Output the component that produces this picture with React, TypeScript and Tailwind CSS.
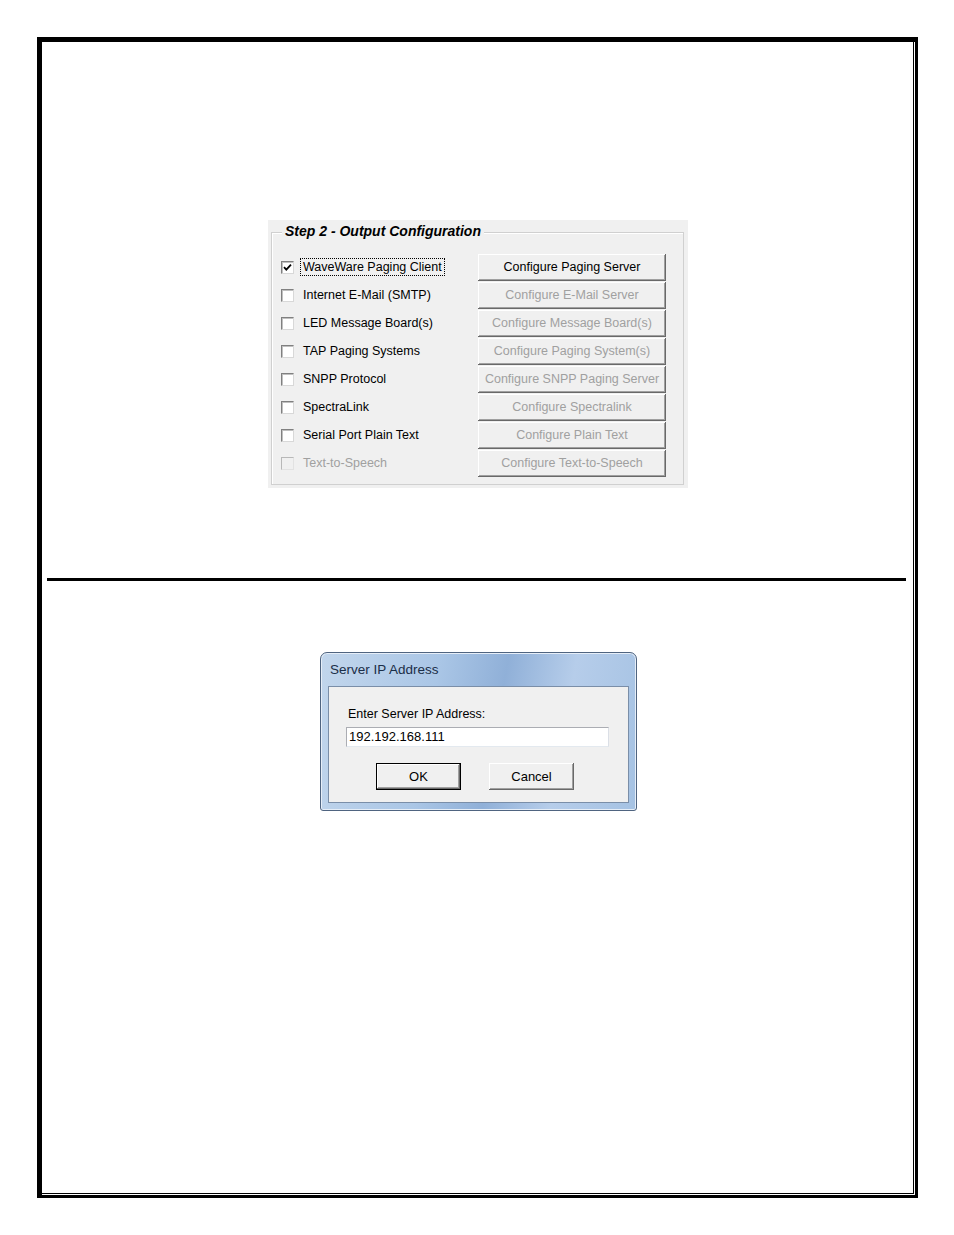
import React from 'react';

const rows = [
  { label: 'WaveWare Paging Client', button: 'Configure Paging Server', checked: true, enabled: true },
  { label: 'Internet E-Mail (SMTP)', button: 'Configure E-Mail Server', checked: false, enabled: true },
  { label: 'LED Message Board(s)', button: 'Configure Message Board(s)', checked: false, enabled: true },
  { label: 'TAP Paging Systems', button: 'Configure Paging System(s)', checked: false, enabled: true },
  { label: 'SNPP Protocol', button: 'Configure SNPP Paging Server', checked: false, enabled: true },
  { label: 'SpectraLink', button: 'Configure Spectralink', checked: false, enabled: true },
  { label: 'Serial Port Plain Text', button: 'Configure Plain Text', checked: false, enabled: true },
  { label: 'Text-to-Speech', button: 'Configure Text-to-Speech', checked: false, enabled: false },
];

function CheckBox({ checked, enabled }: { checked: boolean; enabled: boolean }) {
  return (
    <span
      className={`w-[13px] h-[13px] flex items-center justify-center border ${
        enabled
          ? 'bg-white border-[#808080] border-b-[#d8d8d8] border-r-[#d8d8d8] shadow-[inset_1px_1px_#c0c0c0]'
          : 'bg-[#f0f0f0] border-[#b8b8b8] border-b-[#e2e2e2] border-r-[#e2e2e2]'
      }`}
    >
      {checked && (
        <svg width="9" height="9" viewBox="0 0 9 9">
          <path d="M1 4.2 L3.3 6.6 L8 1.6" fill="none" stroke="#000" strokeWidth="1.8" />
        </svg>
      )}
    </span>
  );
}

function OutputPanel() {
  return (
    <div className="w-[420px] h-[268px] bg-[#f0f0f0] pt-[12px] pl-[3px] pr-[4px] pb-[3px]">
      <div className="relative h-full border border-[#d0d0d0] shadow-[inset_1px_1px_#ffffff] pt-[20px] pl-[9px]">
        <span className="absolute -top-[10px] left-[10px] px-[3px] bg-[#f0f0f0] text-[14px] leading-[17px] font-bold italic text-black">
          Step 2 - Output Configuration
        </span>
        <div className="flex flex-col">
          {rows.map((r, i) => (
            <div key={r.label} className="flex items-center h-[28px]">
              <div className="w-[197px] flex items-center">
                <CheckBox checked={r.checked} enabled={r.enabled} />
                <span
                  className={`ml-[6px] px-[2px] text-[12.5px] leading-[16px] ${
                    i === 0 ? 'border border-dotted border-black' : 'border border-transparent'
                  } ${r.enabled ? 'text-black' : 'text-[#a0a0a0]'}`}
                >
                  {r.label}
                </span>
              </div>
              <div
                className={`w-[188px] h-[27px] flex items-center justify-center text-[12.5px] bg-[#f0f0f0] shadow-[inset_-1px_-1px_#696969,inset_1px_1px_#ffffff,inset_-2px_-2px_#a0a0a0] ${
                  i === 0 ? 'text-black' : 'text-[#a0a0a0]'
                }`}
              >
                {r.button}
              </div>
            </div>
          ))}
        </div>
      </div>
    </div>
  );
}

function IpDialog() {
  return (
    <div className="w-[317px] h-[159px] rounded-t-[7px] rounded-b-[3px] border border-[#4f6480] bg-[linear-gradient(100deg,#c2d6ec_0%,#aac6e6_35%,#90b0d8_55%,#b6cdea_75%,#a5c2e3_100%)] px-[7px] pb-[7px] flex flex-col shadow-[inset_0_0_0_1px_#e6eef8]">
      <div className="h-[33px] flex items-center pl-[2px] pt-[1px]">
        <span className="text-[13.5px] text-[#1b2e48]">Server IP Address</span>
      </div>
      <div className="flex-1 border border-[#7a8ea8] bg-[#f0f0f0] pl-[17px] pt-[20px]">
        <div className="ml-[2px] text-[12.5px] leading-[15px] text-black">Enter Server IP Address:</div>
        <div className="mt-[5px] w-[263px] h-[20px] bg-white border border-[#abadb3] border-b-[#e3e9ef] border-r-[#dbdfe6] flex items-center pl-[2px] text-[13px] text-black">
          192.192.168.111
        </div>
        <div className="mt-[16px] flex ml-[30px] gap-[28px]">
          <div className="w-[85px] h-[27px] flex items-center justify-center text-[13px] text-black bg-[#f0f0f0] border border-black shadow-[inset_-1px_-1px_#696969,inset_1px_1px_#ffffff,inset_-2px_-2px_#a0a0a0]">
            OK
          </div>
          <div className="w-[85px] h-[27px] flex items-center justify-center text-[13px] text-black bg-[#f0f0f0] shadow-[inset_-1px_-1px_#696969,inset_1px_1px_#ffffff,inset_-2px_-2px_#a0a0a0]">
            Cancel
          </div>
        </div>
      </div>
    </div>
  );
}

export default function App() {
  return (
    <div className="w-[954px] h-[1235px] bg-white pt-[37px] pl-[37px] font-['Liberation_Sans',Arial,sans-serif]">
      <div className="w-[881px] h-[1161px] border-t-[5px] border-l-[5px] border-r-[3px] border-b-[3px] border-black pr-[1px] pb-[1px]">
        <div className="w-full h-full border-r border-b border-black flex flex-col">
          {/* top section */}
          <div className="h-[536px] pt-[178px] pl-[226px]">
            <OutputPanel />
          </div>
          <div className="ml-[5px] w-[859px] h-[3px] bg-black" />
          {/* bottom section */}
          <div className="pt-[71px] pl-[278px]">
            <IpDialog />
          </div>
        </div>
      </div>
    </div>
  );
}
